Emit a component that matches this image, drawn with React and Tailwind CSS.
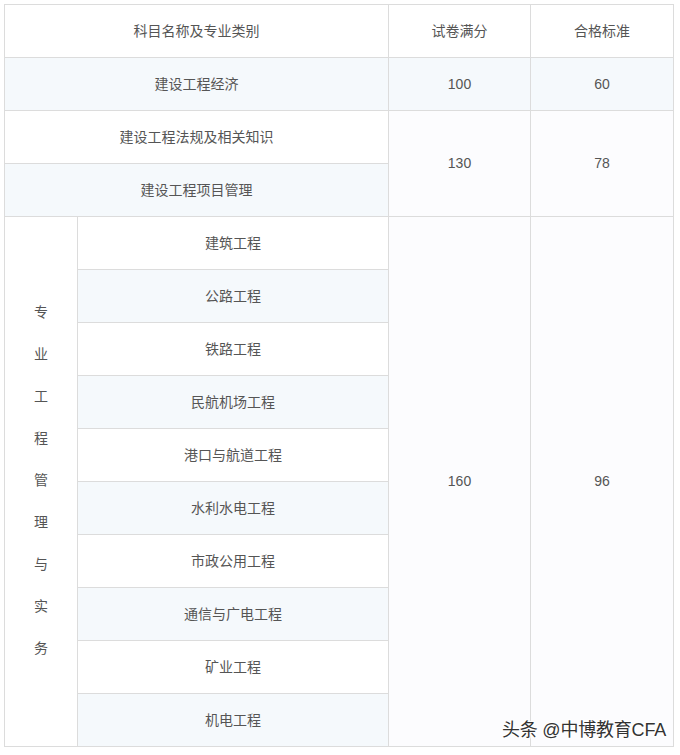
import React from "react";

const specs = [
  "建筑工程",
  "公路工程",
  "铁路工程",
  "民航机场工程",
  "港口与航道工程",
  "水利水电工程",
  "市政公用工程",
  "通信与广电工程",
  "矿业工程",
  "机电工程",
];

const vert = ["专", "业", "工", "程", "管", "理", "与", "实", "务"];

const cell = "flex items-center justify-center text-[14px] text-[#555]";

export default function App() {
  return (
    <div
      className="relative w-[680px] h-[755px] bg-white"
      style={{ fontFamily: '"Liberation Sans", "Noto Sans CJK SC", sans-serif' }}
    >
      <div className="absolute left-[4px] top-[4px] grid grid-cols-[72px_310px_141px_142px] grid-rows-[repeat(14,52px)] gap-px bg-[#dcdcdc] p-px">
        <div className={`${cell} col-span-2 bg-white`}>科目名称及专业类别</div>
        <div className={`${cell} bg-white`}>试卷满分</div>
        <div className={`${cell} bg-white`}>合格标准</div>

        <div className={`${cell} col-span-2 bg-[#f5f9fc]`}>建设工程经济</div>
        <div className={`${cell} bg-[#f5f9fc]`}>100</div>
        <div className={`${cell} bg-[#f5f9fc]`}>60</div>

        <div className={`${cell} col-span-2 bg-white`}>建设工程法规及相关知识</div>
        <div className={`${cell} row-span-2 bg-[#fcfcfe]`}>130</div>
        <div className={`${cell} row-span-2 bg-[#fcfcfe]`}>78</div>
        <div className={`${cell} col-span-2 col-start-1 bg-[#f5f9fc]`}>建设工程项目管理</div>

        <div className={`${cell} row-span-10 col-start-1 flex-col bg-white pb-[3px]`}>
          {vert.map((c, i) => (
            <span key={i} className="leading-[42px]">
              {c}
            </span>
          ))}
        </div>
        <div className={`${cell} bg-white`}>{specs[0]}</div>
        <div className={`${cell} row-span-10 bg-[#fcfcfe]`}>160</div>
        <div className={`${cell} row-span-10 bg-[#fcfcfe]`}>96</div>
        {specs.slice(1).map((s, i) => (
          <div
            key={s}
            className={`${cell} col-start-2 ${i % 2 === 0 ? "bg-[#f5f9fc]" : "bg-white"}`}
          >
            {s}
          </div>
        ))}
      </div>
      <div
        className="absolute right-[14px] top-[717px] text-[18px] text-[#333] tracking-[-0.2px]"
        style={{ textShadow: "1px 1px 0 #fff, -1px -1px 0 #fff, 1px -1px 0 #fff, -1px 1px 0 #fff" }}
      >
        头条 @中博教育CFA
      </div>
    </div>
  );
}
